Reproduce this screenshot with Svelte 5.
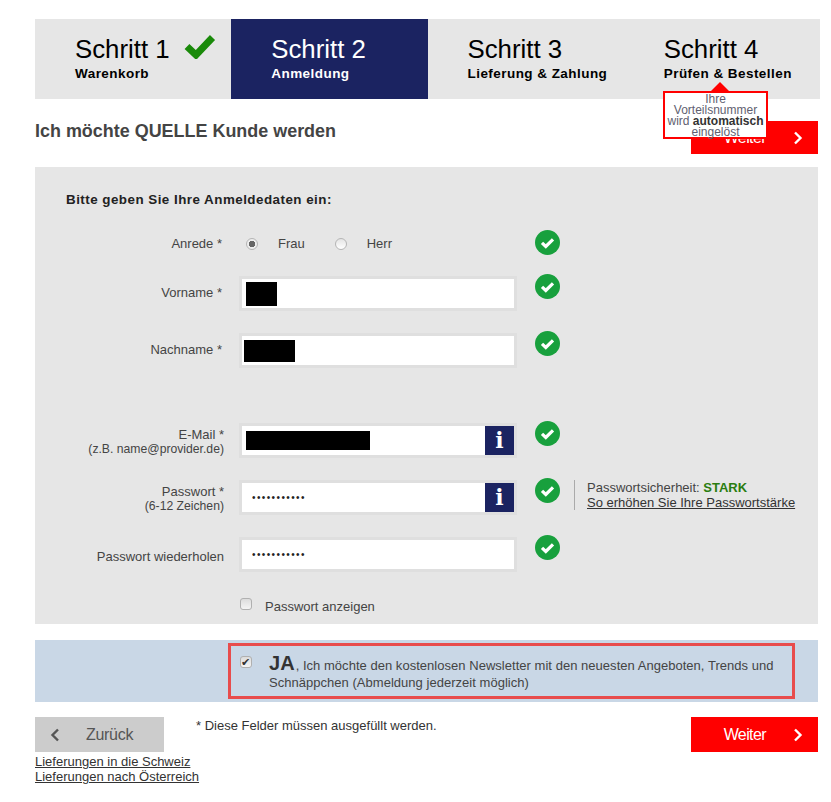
<script>
  let steps = [
    { title: 'Schritt 1', sub: 'Warenkorb', done: true },
    { title: 'Schritt 2', sub: 'Anmeldung', active: true },
    { title: 'Schritt 3', sub: 'Lieferung & Zahlung' },
    { title: 'Schritt 4', sub: 'Prüfen & Bestellen' }
  ];
</script>

{#snippet ok()}
  <svg class="ok" viewBox="0 0 25 25" width="25" height="25">
    <circle cx="12.5" cy="12.5" r="12.5" fill="#18a03d" />
    <path d="M7 12.8l3.8 3.7 7.2-7.2" fill="none" stroke="#fff" stroke-width="3.2" />
  </svg>
{/snippet}

{#snippet info()}
  <span class="info">i</span>
{/snippet}

{#snippet chevron(color, flip)}
  <svg class="chev" class:flip viewBox="0 0 10 14" width="10" height="14">
    <path d="M2 1.5l5.5 5.5-5.5 5.5" fill="none" stroke={color} stroke-width="2.4" />
  </svg>
{/snippet}

<div class="page">
  <div class="steps">
    {#each steps as s}
      <div class="step" class:active={s.active}>
        <div class="title">
          {s.title}
          {#if s.done}
            <svg class="tick" viewBox="0 0 32 26" width="32" height="26">
              <path d="M3 13.5l9 8.5L28.5 4.5" fill="none" stroke="#1a8a0a" stroke-width="7" />
            </svg>
          {/if}
        </div>
        <div class="sub">{s.sub}</div>
      </div>
    {/each}
    <div class="tooltip">
      Ihre Vorteilsnummer wird <b>automatisch</b> eingelöst
    </div>
  </div>

  <div class="headline">
    <h1>Ich möchte <b>QUELLE</b> Kunde werden</h1>
    <button class="next top">Weiter {@render chevron('#fff')}</button>
  </div>

  <div class="panel">
    <h2>Bitte geben Sie Ihre Anmeldedaten ein:</h2>

    <div class="row anrede">
      <div class="label">Anrede *</div>
      <div class="radios">
        <label><input type="radio" name="anrede" checked /> Frau</label>
        <label><input type="radio" name="anrede" /> Herr</label>
      </div>
      {@render ok()}
    </div>

    <div class="row">
      <div class="label pad">Vorname *</div>
      <div class="field"><span class="black" style="width:31px;height:24px;margin-left:4px"></span></div>
      {@render ok()}
    </div>

    <div class="row">
      <div class="label pad">Nachname *</div>
      <div class="field"><span class="black" style="width:51px;height:22px;margin-left:2px"></span></div>
      {@render ok()}
    </div>

    <div class="row email">
      <div class="label wide">E-Mail *<small>(z.B. name@provider.de)</small></div>
      <div class="field"><span class="black" style="width:124px;height:19px;margin-left:4px"></span>{@render info()}</div>
      {@render ok()}
    </div>

    <div class="row">
      <div class="label wide">Passwort *<small>(6-12 Zeichen)</small></div>
      <div class="field"><input type="password" value="12345678901" />{@render info()}</div>
      {@render ok()}
      <div class="strength">
        Passwortsicherheit: <b>STARK</b><br />
        <a href="#top">So erhöhen Sie Ihre Passwortstärke</a>
      </div>
    </div>

    <div class="row">
      <div class="label wide pad2">Passwort wiederholen</div>
      <div class="field"><input type="password" value="12345678901" /></div>
      {@render ok()}
    </div>

    <label class="show"><input type="checkbox" /> Passwort anzeigen</label>
  </div>

  <div class="band">
    <div class="newsletter">
      <input type="checkbox" checked />
      <p><b>JA</b>, Ich möchte den kostenlosen Newsletter mit den neuesten Angeboten, Trends und Schnäppchen (Abmeldung jederzeit möglich)</p>
    </div>
  </div>

  <div class="footer">
    <div class="left">
      <button class="back">{@render chevron('#555', true)} Zurück</button>
      <a href="#top">Lieferungen in die Schweiz</a>
      <a href="#top">Lieferungen nach Österreich</a>
    </div>
    <p class="required">* Diese Felder müssen ausgefüllt werden.</p>
    <button class="next">Weiter {@render chevron('#fff')}</button>
  </div>
</div>

<style>
  :global(body) {
    margin: 0;
    background: #fff;
    font-family: "Liberation Sans", Arial, sans-serif;
    color: #333;
  }
  .page {
    width: 783px;
    margin-left: 35px;
    padding-top: 19px;
    height: 783px;
  }
  .steps {
    position: relative;
    display: flex;
    width: 785px;
    height: 80px;
    background: #e6e6e6;
  }
  .step {
    width: 196.5px;
    box-sizing: border-box;
    padding: 14px 0 0 40px;
    color: #000;
  }
  .step.active {
    background: #1b2361;
    color: #fff;
  }
  .title {
    position: relative;
    font-size: 25.8px;
    line-height: 32px;
  }
  .tick {
    position: absolute;
    left: 109px;
    top: 0;
  }
  .sub {
    font-size: 13.5px;
    font-weight: bold;
    letter-spacing: 0.45px;
    line-height: 16px;
    margin-top: 1px;
  }
  .tooltip {
    position: absolute;
    left: 628px;
    top: 72px;
    width: 105px;
    height: 48px;
    box-sizing: border-box;
    border: 2px solid #f00;
    background: #fff;
    font-size: 12px;
    line-height: 11px;
    padding-top: 1px;
    text-align: center;
    color: #5f5f70;
    z-index: 2;
  }
  .tooltip b {
    color: #333;
  }
  .tooltip::before {
    content: "";
    position: absolute;
    left: 46px;
    top: -11px;
    border: 9px solid transparent;
    border-top: 0;
    border-bottom-color: #f00;
  }
  .headline {
    display: flex;
    justify-content: space-between;
    height: 68px;
  }
  h1 {
    margin: 22px 0 0;
    font-size: 17.95px;
    line-height: 20px;
    font-weight: bold;
    color: #444;
  }
  .next {
    width: 127px;
    height: 35px;
    background: #f00;
    color: #fff;
    border: 0;
    font: 16px "Liberation Sans", Arial, sans-serif;
    display: flex;
    align-items: center;
    justify-content: flex-end;
    gap: 27px;
    padding: 0 15px 0 0;
    letter-spacing: -0.6px;
  }
  .next.top {
    height: 33px;
    margin-top: 22px;
  }
  .panel {
    height: 457px;
    box-sizing: border-box;
    background: #e6e6e6;
    padding-top: 25px;
  }
  h2 {
    margin: 0 0 24px 31px;
    font-size: 13.4px;
    line-height: 16px;
    letter-spacing: 0.47px;
    color: #222;
  }
  .row {
    display: flex;
    align-items: flex-start;
    height: 35px;
    margin-bottom: 22px;
    position: relative;
  }
  .row.anrede {
    height: 25px;
    margin-bottom: 19px;
  }
  .row.anrede .label {
    padding-top: 5px;
  }
  .row.email {
    margin-top: 55px;
  }
  .label {
    width: 187px;
    flex: none;
    text-align: right;
    font-size: 13px;
    line-height: 14px;
    color: #444;
    padding-top: 5px;
    white-space: nowrap;
  }
  .label.wide {
    width: 189px;
    margin-right: -2px;
  }
  .label small {
    display: block;
    font-size: 12.2px;
    line-height: 14px;
  }
  .label.pad {
    padding-top: 10px;
  }
  .label.pad2 {
    padding-top: 13px;
  }
  .radios {
    width: 278px;
    margin-left: 17px;
    display: flex;
    padding-top: 5px;
    font-size: 13px;
    line-height: 14px;
    color: #444;
    flex: none;
    box-sizing: border-box;
  }
  .radios label {
    display: flex;
    align-items: center;
    gap: 20px;
    margin-left: 7px;
    margin-right: 30px;
  }
  .radios label + label {
    margin-left: 0;
  }
  input[type="radio"] {
    appearance: none;
    width: 12px;
    height: 12px;
    margin: 0;
    border-radius: 50%;
    border: 1px solid #b5b5b5;
    background: linear-gradient(#e4e4e4, #fff);
    box-sizing: border-box;
  }
  input[type="radio"]:checked {
    background: radial-gradient(circle, #666 3px, #eee 3.5px);
  }
  input[type="checkbox"] {
    appearance: none;
    width: 12px;
    height: 12px;
    margin: 0;
    border-radius: 3px;
    border: 1px solid #b0b0b0;
    background: linear-gradient(#dcdcdc, #f4f4f4);
    box-sizing: border-box;
    position: relative;
    flex: none;
  }
  input[type="checkbox"]:checked::after {
    content: "✔";
    position: absolute;
    left: 0;
    top: -2px;
    font-size: 11px;
    line-height: 14px;
    color: #333;
  }
  .field {
    flex: none;
    width: 278px;
    height: 35px;
    margin-left: 17px;
    box-sizing: border-box;
    border: 3px solid #dfdfdf;
    background: #fff;
    display: flex;
    align-items: center;
    justify-content: space-between;
  }
  .black {
    background: #000;
    margin-right: auto;
  }
  .field input {
    border: 0;
    outline: 0;
    background: none;
    width: 200px;
    padding: 0 0 0 10px;
    font: 10px "Liberation Sans", Arial, sans-serif;
    letter-spacing: 1.4px;
    color: #222;
  }
  .info {
    width: 29px;
    height: 29px;
    background: #1b2361;
    color: #fff;
    font: bold 22px/29px "DejaVu Serif", serif;
    text-align: center;
  }
  .ok {
    margin-left: 18px;
    margin-top: -2px;
    flex: none;
  }
  .strength {
    margin-left: 14px;
    padding-left: 12px;
    border-left: 1px solid #aaa;
    font-size: 13px;
    line-height: 15px;
    color: #444;
    height: 30px;
    white-space: nowrap;
  }
  .strength b {
    color: #2a7d10;
  }
  .strength a,
  .left a {
    color: #333;
    display: block;
  }
  .show {
    display: flex;
    align-items: center;
    gap: 13px;
    margin-left: 205px;
    margin-top: 28px;
    font-size: 13px;
    color: #444;
    line-height: 14px;
  }
  .show input {
    margin-top: -6px;
  }
  .band {
    margin-top: 16px;
    height: 62px;
    background: #c9d7e6;
    padding-top: 3px;
    box-sizing: border-box;
  }
  .newsletter {
    margin-left: 193px;
    width: 567px;
    height: 56px;
    box-sizing: border-box;
    border: 3px solid #e84c4c;
    display: flex;
    gap: 17px;
    padding: 9px 0 0 9px;
  }
  .newsletter input {
    margin-top: 1px;
  }
  .newsletter p {
    margin: 0;
    font-size: 13px;
    line-height: 17px;
    letter-spacing: 0.03px;
    color: #444;
    width: 515px;
  }
  .newsletter b {
    font-size: 20px;
    color: #333;
    margin-right: 1px;
  }
  .footer {
    display: flex;
    align-items: flex-start;
    margin-top: 15px;
  }
  .left {
    width: 161px;
    font-size: 13px;
    line-height: 15px;
  }
  .left a {
    white-space: nowrap;
  }
  .back {
    width: 129px;
    height: 35px;
    border: 0;
    background: #ccc;
    color: #555;
    font: 16px "Liberation Sans", Arial, sans-serif;
    display: flex;
    align-items: center;
    gap: 26px;
    padding: 0 0 0 15px;
    margin-bottom: 2px;
    letter-spacing: -0.3px;
  }
  .chev.flip {
    transform: scaleX(-1);
  }
  .required {
    margin: 1px 0 0;
    font-size: 13px;
    line-height: 15px;
    color: #333;
    flex: 1;
  }
</style>
